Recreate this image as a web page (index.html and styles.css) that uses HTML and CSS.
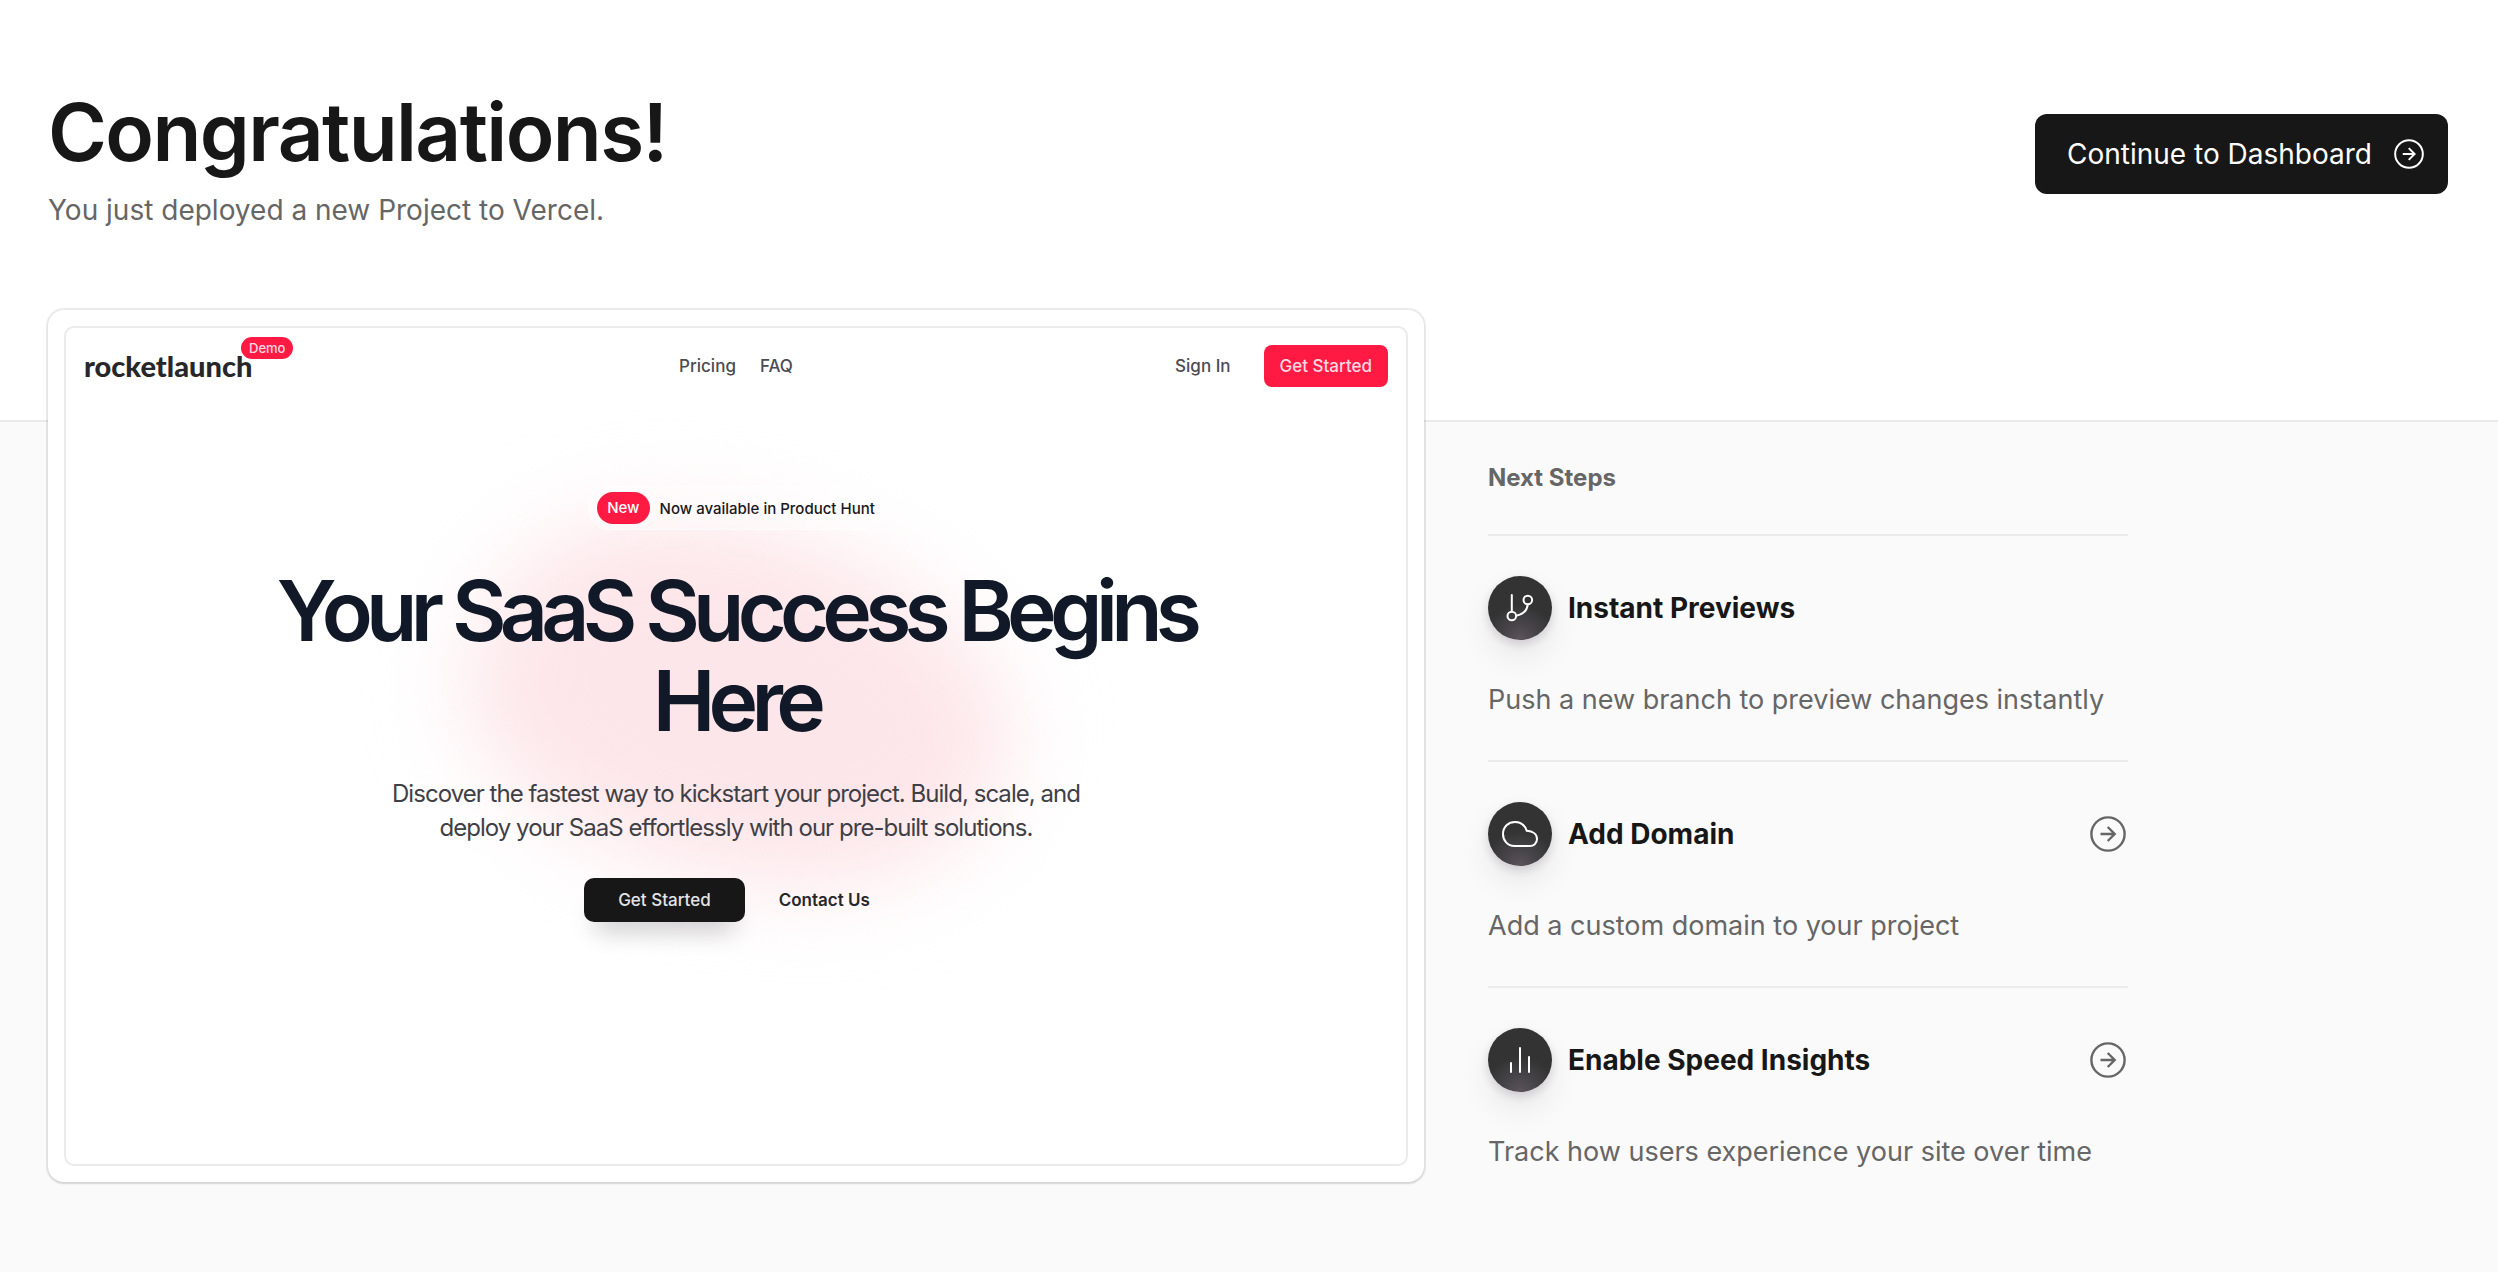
FILE: index.html
```html
<!DOCTYPE html>
<html lang="en">
<head>
<meta charset="utf-8">
<meta name="viewport" content="width=device-width, initial-scale=1">
<title>Congratulations!</title>
<link rel="stylesheet" href="styles.css">
</head>
<body>
<header class="header">
  <div>
    <h1 class="title">Congratulations!</h1>
    <p class="subtitle">You just deployed a new Project to Vercel.</p>
  </div>
  <button class="continue" type="button">
    Continue to Dashboard
    <svg class="continue-icon" viewBox="0 0 36 36" aria-hidden="true"><circle cx="18" cy="18" r="16.6"/><path d="M10.5 18H25M17.7 11l7 7-7 7"/></svg>
  </button>
</header>
<main class="content">
  <section class="card" aria-label="Deployment preview">
    <div class="site">
      <div class="site-nav">
        <div class="brand"><span class="logo">rocketlaunch<span class="demo">Demo</span></span></div>
        <nav class="site-links"><a href="#pricing">Pricing</a><a href="#faq">FAQ</a></nav>
        <div class="account"><a href="#signin">Sign In</a><button class="start-small" type="button">Get Started</button></div>
      </div>
      <div class="hero">
        <div class="glow"></div>
        <div class="pill"><span class="new">New</span>Now available in Product Hunt</div>
        <h2 class="headline">Your SaaS Success Begins Here</h2>
        <p class="lead">Discover the fastest way to kickstart your project. Build, scale, and deploy your SaaS effortlessly with our pre-built solutions.</p>
        <div class="actions">
          <button class="start" type="button">Get Started</button>
          <a class="contact" href="#contact">Contact Us</a>
        </div>
      </div>
    </div>
  </section>
  <section class="steps">
    <h2 class="steps-title">Next Steps</h2>
    <article class="step">
      <div class="step-head">
        <span class="badge"><svg width="28" height="28" viewBox="0 0 28 28" aria-hidden="true"><path d="M5.8 1v16.6M21.8 10.5C21 16.500 17 20.500 10.200 21.700"/><circle cx="5.800" cy="22" r="4.300"/><circle cx="21.800" cy="6" r="4.300"/></svg></span>
        <h3 class="step-title">Instant Previews</h3>
      </div>
      <p class="step-text">Push a new branch to preview changes instantly</p>
    </article>
    <article class="step">
      <div class="step-head">
        <span class="badge"><svg width="36" height="28" viewBox="0 0 36 28" aria-hidden="true"><path d="M12.500 26C5.500 26 1 20.500 1 14C1 6.500 6.500 2 13 2C18.500 2 22.800 5.200 24.800 10.800C31 11.200 35 14.500 35 19C35 23.500 31.500 26 28 26Z"/></svg></span>
        <h3 class="step-title">Add Domain</h3>
        <a class="go" href="#domain" aria-label="Add Domain"><svg viewBox="0 0 36 36" aria-hidden="true"><circle cx="18" cy="18" r="16.6"/><path d="M10.5 18H25M17.7 11l7 7-7 7"/></svg></a>
      </div>
      <p class="step-text">Add a custom domain to your project</p>
    </article>
    <article class="step">
      <div class="step-head">
        <span class="badge"><svg width="28" height="28" viewBox="0 0 28 28" aria-hidden="true"><path d="M5 17v9M14 2v24M23 11v15"/></svg></span>
        <h3 class="step-title">Enable Speed Insights</h3>
        <a class="go" href="#insights" aria-label="Enable Speed Insights"><svg viewBox="0 0 36 36" aria-hidden="true"><circle cx="18" cy="18" r="16.6"/><path d="M10.5 18H25M17.7 11l7 7-7 7"/></svg></a>
      </div>
      <p class="step-text">Track how users experience your site over time</p>
    </article>
  </section>
</main>
</body>
</html>
```
FILE: styles.css
```css
* { box-sizing: border-box; }
body {
  margin: 0;
  background: #fafafa;
  color: #171717;
  font-family: Inter, "Liberation Sans", sans-serif;
}
h1, h2, h3, p { margin: 0; }
a { color: inherit; text-decoration: none; }
button { border: 0; font: inherit; cursor: pointer; }
svg { display: block; fill: none; stroke: currentColor; }

.header {
  display: flex;
  justify-content: space-between;
  align-items: flex-start;
  padding: 84px 50px 190px 48px;
  background: #fff;
  border-bottom: 2px solid #ebebeb;
}
.title { font-size: 80px; line-height: 96px; font-weight: 600; letter-spacing: -0.02em; }
.subtitle { margin-top: 10px; color: #666; font-size: 28px; line-height: 40px; }
.continue {
  display: flex;
  align-items: center;
  gap: 22px;
  height: 80px;
  margin-top: 30px;
  padding: 0 24px 0 32px;
  border-radius: 12px;
  background: #171717;
  color: #fff;
  font-size: 28px;
  line-height: 40px;
}
.continue-icon { width: 30px; height: 30px; stroke-width: 2.4; }

.content {
  display: grid;
  grid-template-columns: 43fr 20fr 8fr;
  column-gap: 64px;
  align-items: start;
  padding: 0 50px 60px 48px;
}
.card {
  position: relative;
  margin-top: -112px;
  padding: 16px;
  border-radius: 16px;
  background: #fff;
  box-shadow: 0 0 0 2px rgba(0, 0, 0, .08), 0 2px 3px rgba(0, 0, 0, .08);
}
.site {
  min-height: 840px;
  overflow: hidden;
  border: 2px solid #ebebeb;
  border-radius: 10px;
  font-size: 17px;
  font-weight: 500;
}
.site-nav {
  display: grid;
  grid-template-columns: 1fr auto 1fr;
  align-items: center;
  height: 76px;
  padding: 0 18px;
  color: #4b4b52;
}
.logo { position: relative; color: #27272a; font-family: Lato, sans-serif; font-size: 29px; line-height: 40px; font-weight: 900; }
.demo {
  position: absolute;
  left: 157px;
  top: -11px;
  padding: 0 8px;
  border-radius: 11px;
  background: #ff1a44;
  color: #ffd9e0;
  font-family: Inter, sans-serif;
  font-size: 13px;
  line-height: 22px;
  font-weight: 500;
}
.site-links { display: flex; gap: 24px; }
.account { display: flex; justify-content: flex-end; align-items: center; gap: 33px; }
.start-small { height: 42px; padding: 0 16px; border-radius: 8px; background: #ff1a44; color: #ffd9e0; }

.hero {
  position: relative;
  display: flex;
  flex-direction: column;
  align-items: center;
  padding-top: 82px;
  text-align: center;
}
.hero > * { position: relative; }
.hero > .glow {
  position: absolute;
  left: 50%;
  top: 124px;
  width: 550px;
  height: 350px;
  margin-left: -272px;
  border-radius: 40% 55% 45% 50% / 55% 50% 50% 45%;
  background: #fde6e9;
  filter: blur(44px);
  transform: rotate(12deg);
}
.pill {
  display: flex;
  align-items: center;
  gap: 10px;
  height: 44px;
  padding: 0 8px;
  border: 1px solid rgba(255, 255, 255, .6);
  border-radius: 22px;
  background: rgba(255, 255, 255, .4);
  color: #18181b;
  font-size: 15px;
}
.new { padding: 0 10px; border-radius: 16px; background: #ff1a44; color: #fff; line-height: 32px; }
.headline { max-width: 1000px; margin-top: 36px; color: #111827; font-size: 84px; line-height: 90px; font-weight: 600; letter-spacing: -0.08em; }
.lead { max-width: 720px; margin-top: 31px; color: #3f3f46; font-size: 24px; line-height: 34px; font-weight: 400; letter-spacing: -0.04em; }
.actions { display: flex; align-items: center; gap: 34px; margin-top: 33px; }
.start {
  height: 44px;
  padding: 0 34px;
  border-radius: 10px;
  background: #171717;
  color: #e4e4e7;
  box-shadow: 0 20px 24px -12px rgba(20, 20, 30, .25);
}
.contact { padding-right: 18px; color: #27272a; font-weight: 600; }

.steps-title { padding: 36px 0; color: #666; font-size: 24px; line-height: 40px; font-weight: 700; }
.step { padding: 40px 0; border-top: 2px solid #ebebeb; }
.step-head { display: flex; align-items: center; gap: 16px; }
.badge {
  display: grid;
  place-items: center;
  width: 64px;
  height: 64px;
  border-radius: 50%;
  background: radial-gradient(circle at 50% 100%, #5c545a 0, #454347 25%, #333 50%);
  color: #fff;
  stroke-width: 2;
  stroke-linecap: round;
  box-shadow: 0 4px 8px rgba(60, 40, 60, .16), 0 16px 32px rgba(0, 0, 0, .08);
}
.step-title { font-size: 28px; line-height: 40px; font-weight: 700; }
.go { margin: 0 2px 0 auto; color: #666; stroke-width: 2.4; }
.go svg { width: 36px; height: 36px; }
.step-text { margin-top: 40px; color: #666; font-size: 27px; line-height: 40px; }
```
